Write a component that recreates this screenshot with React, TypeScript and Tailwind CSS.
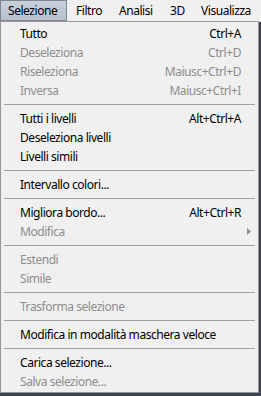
import { Fragment } from "react";

type Item = {
  label: string;
  shortcut?: string;
  disabled?: boolean;
  submenu?: boolean;
};

// null = separator
const items: (Item | null)[] = [
  { label: "Tutto", shortcut: "Ctrl+A" },
  { label: "Deseleziona", shortcut: "Ctrl+D", disabled: true },
  { label: "Riseleziona", shortcut: "Maiusc+Ctrl+D", disabled: true },
  { label: "Inversa", shortcut: "Maiusc+Ctrl+I", disabled: true },
  null,
  { label: "Tutti i livelli", shortcut: "Alt+Ctrl+A" },
  { label: "Deseleziona livelli" },
  { label: "Livelli simili" },
  null,
  { label: "Intervallo colori..." },
  null,
  { label: "Migliora bordo...", shortcut: "Alt+Ctrl+R" },
  { label: "Modifica", disabled: true, submenu: true },
  null,
  { label: "Estendi", disabled: true },
  { label: "Simile", disabled: true },
  null,
  { label: "Trasforma selezione", disabled: true },
  null,
  { label: "Modifica in modalità maschera veloce" },
  null,
  { label: "Carica selezione..." },
  { label: "Salva selezione...", disabled: true },
];

export default function App() {
  return (
    <div className="w-[261px] h-[396px] bg-[#3c4450] overflow-hidden font-['Noto_Sans',sans-serif] text-[12px] leading-none tracking-[-0.45px]">
      {/* Menu bar */}
      <div className="h-[22px] bg-[#f0f0f0] flex items-start text-black">
        <div className="h-[21px] w-[67px] shrink-0 border border-[#7d8794] bg-gradient-to-b from-[#c9d0da] to-[#b9c1cc] flex items-center pl-[7px]">
          Selezione
        </div>
        <div className="h-[21px] w-[52px] shrink-0 flex items-center pl-[9px]">Filtro</div>
        <div className="h-[21px] w-[51px] shrink-0 flex items-center">Analisi</div>
        <div className="h-[21px] w-[31px] shrink-0 flex items-center">3D</div>
        <div className="h-[21px] flex items-center">Visualizza</div>
      </div>

      {/* Dropdown */}
      <div className="w-[259px] h-[372px] bg-[#f0f0f0] border border-[#979797] -mt-px pt-[2px]">
        {items.map((item, idx) =>
          item === null ? (
            <div key={idx} className="h-[9px] px-[3px] pt-[4px]">
              <div className="h-px bg-[#a0a0a0]" />
            </div>
          ) : (
            <Fragment key={item.label}>
              <div
                className={`h-[19px] flex items-center pl-[19px] pr-[17px] ${
                  item.disabled ? "text-[#8d8d8d]" : "text-black"
                }`}
              >
                <span className="flex-1">{item.label}</span>
                {item.shortcut && <span>{item.shortcut}</span>}
                {item.submenu && (
                  <svg width="4" height="7" viewBox="0 0 4 7" className="mr-[-10px]">
                    <path d="M0 0 L4 3.5 L0 7 Z" fill="#8d8d8d" />
                  </svg>
                )}
              </div>
            </Fragment>
          )
        )}
      </div>
    </div>
  );
}
